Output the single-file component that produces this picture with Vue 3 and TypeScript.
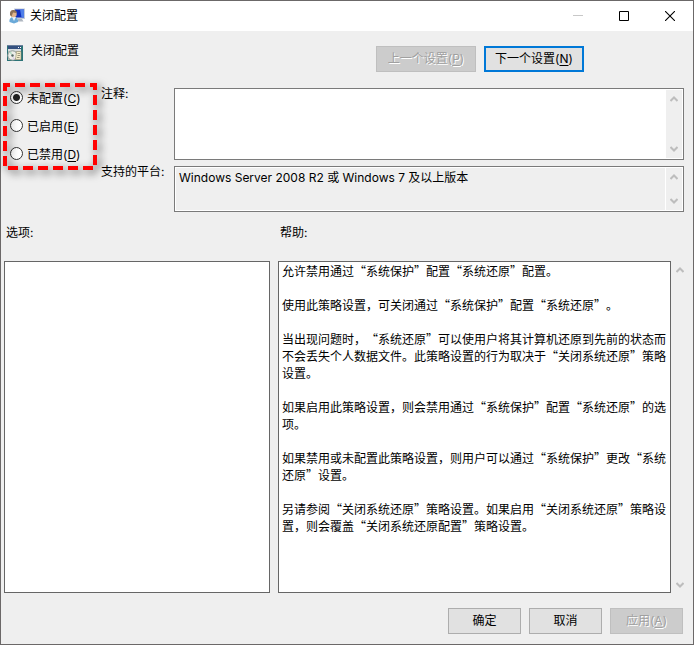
<script setup lang="ts">
import { ref } from 'vue'

interface PolicyState {
  value: string
  label: string
  key: string
}

const states: PolicyState[] = [
  { value: 'unset', label: '未配置', key: 'C' },
  { value: 'enabled', label: '已启用', key: 'E' },
  { value: 'disabled', label: '已禁用', key: 'D' },
]

const selected = ref('unset')
const comment = ref('')
const platform = ref('Windows Server 2008 R2 或 Windows 7 及以上版本')

const help: string[] = [
  '允许禁用通过“系统保护”配置“系统还原”配置。',
  '使用此策略设置，可关闭通过“系统保护”配置“系统还原”。',
  '当出现问题时，“系统还原”可以使用户将其计算机还原到先前的状态而不会丢失个人数据文件。此策略设置的行为取决于“关闭系统还原”策略设置。',
  '如果启用此策略设置，则会禁用通过“系统保护”配置“系统还原”的选项。',
  '如果禁用或未配置此策略设置，则用户可以通过“系统保护”更改“系统还原”设置。',
  '另请参阅“关闭系统还原”策略设置。如果启用“关闭系统还原”策略设置，则会覆盖“关闭系统还原配置”策略设置。',
]
</script>

<template>
  <div class="window" lang="zh-CN">
    <header class="titlebar">
      <svg class="app-icon" viewBox="0 0 16 16" aria-hidden="true">
        <path d="M5 0.500H16V11H6Z" fill="#c3ccd8" />
        <path d="M6 1.500H15V9.500H6Z" fill="#1030c0" />
        <path d="M11 1.500H15V9.500H12.500Z" fill="#4f7fe8" />
        <path d="M9 11H13L14.500 13.500H8Z" fill="#aeb6c0" />
        <path d="M0.500 14C0 10.500 2 9 4.500 9S9.500 10.500 9 14L5 15.500Z" fill="#6aa9d8" />
        <path d="M3 9L5 13L7 9Z" fill="#e8f3fb" />
        <circle cx="4.500" cy="6" r="3.200" fill="#e2b58a" />
        <path d="M1 7C0.500 3 2.500 1.500 5 2S8 4 7.500 5L4 4.500L2.500 8.500Z" fill="#8d7157" />
      </svg>
      <h1 class="title">关闭配置</h1>
      <div class="controls">
        <button class="control" type="button" disabled aria-label="最小化">
          <svg viewBox="0 0 10 10"><path d="M0 4.500H10" stroke="#c8c8c8" /></svg>
        </button>
        <button class="control" type="button" aria-label="最大化">
          <svg viewBox="0 0 10 10"><path d="M0.500 0.500H9.500V9.500H0.500Z" fill="none" stroke="#000" /></svg>
        </button>
        <button class="control" type="button" aria-label="关闭">
          <svg viewBox="0 0 10 10"><path d="M0 0L10 10M10 0L0 10" stroke="#000" stroke-width="1.100" /></svg>
        </button>
      </div>
    </header>

    <section class="heading">
      <svg class="policy-icon" viewBox="0 0 16 16" aria-hidden="true">
        <path d="M0 0H16V16H0Z" fill="#2c7377" />
        <path d="M0 0H16V1H0Z" fill="#6a7f9c" />
        <path d="M1 1H14V4H1Z" fill="#34507f" />
        <path d="M1 4H14V6H1Z" fill="#d8dde0" />
        <path d="M1 6H14V15H1Z" fill="#b7bdb6" />
        <path d="M11 2.500H12M13 2.500H14" stroke="#fff" />
        <circle cx="5.500" cy="10.500" r="4.700" fill="#eceee9" stroke="#8b9994" />
        <path d="M5.500 10.500L2 7.500L4 6.500Z" fill="#b4dcc5" />
        <path d="M5.500 10.500L8 14L6 15Z" fill="#dfd0e4" />
        <circle cx="5.500" cy="10.500" r="1.200" fill="#556965" />
        <path d="M9.500 6.500H14V14.500H8.500Z" fill="#f4ecc9" stroke="#948d70" stroke-width="0.600" />
        <path d="M10.500 8.500H13M10.500 10.500H13M10 12.500H12.500" stroke="#a09a80" />
      </svg>
      <h2 class="setting-name">关闭配置</h2>
      <div class="nav">
        <button class="btn nav-btn" type="button" disabled>上一个设置(<u>P</u>)</button>
        <button class="btn nav-btn focused" type="button">下一个设置(<u>N</u>)</button>
      </div>
    </section>

    <section class="config">
      <fieldset class="states">
        <label v-for="s in states" :key="s.value" class="state">
          <input v-model="selected" class="radio" type="radio" name="state" :value="s.value" />
          <span>{{ s.label }}(<u>{{ s.key }}</u>)</span>
        </label>
        <svg class="marker" viewBox="0 0 94 87" aria-hidden="true">
          <path
            d="M0 2H92V85H2V0"
            fill="none"
            stroke="#ff0000"
            stroke-width="4"
            stroke-dasharray="10 5"
            stroke-dashoffset="3"
          />
        </svg>
      </fieldset>
      <label class="field-label" for="comment">注释:</label>
      <div class="field comment">
        <textarea id="comment" v-model="comment" class="text"></textarea>
        <div class="scroll">
          <svg class="arrow" viewBox="0 0 8 6"><path d="M0.500 5L4 1.500L7.500 5" /></svg>
          <svg class="arrow" viewBox="0 0 8 6"><path d="M0.500 1L4 4.500L7.500 1" /></svg>
        </div>
      </div>
      <label class="field-label" for="platform">支持的平台:</label>
      <div class="field platform">
        <textarea id="platform" v-model="platform" class="text" readonly></textarea>
        <div class="scroll">
          <svg class="arrow" viewBox="0 0 8 6"><path d="M0.500 5L4 1.500L7.500 5" /></svg>
          <svg class="arrow" viewBox="0 0 8 6"><path d="M0.500 1L4 4.500L7.500 1" /></svg>
        </div>
      </div>
    </section>

    <main class="panes">
      <h3 class="pane-title">选项:</h3>
      <h3 class="pane-title">帮助:</h3>
      <div class="pane"></div>
      <div class="help-row">
        <div class="pane help">
          <p v-for="(line, i) in help" :key="i">{{ line }}</p>
        </div>
        <div class="scroll outer">
          <svg class="arrow" viewBox="0 0 8 6"><path d="M0.500 5L4 1.500L7.500 5" /></svg>
          <svg class="arrow" viewBox="0 0 8 6"><path d="M0.500 1L4 4.500L7.500 1" /></svg>
        </div>
      </div>
    </main>

    <footer class="actions">
      <button class="btn" type="button">确定</button>
      <button class="btn" type="button">取消</button>
      <button class="btn" type="button" disabled>应用(<u>A</u>)</button>
    </footer>
  </div>
</template>

<style>
body {
  margin: 0;
}
</style>

<style scoped>
.window {
  box-sizing: border-box;
  min-height: 100vh;
  display: flex;
  flex-direction: column;
  border: 1px solid #6b6868;
  background: #efefef;
  color: #000;
  font: 12px/16px Inter, 'Noto Sans CJK SC', sans-serif;
}
h1,
h2,
h3,
p {
  margin: 0;
  font-size: 12px;
  font-weight: 400;
}
u {
  text-underline-offset: 2px;
}
.titlebar {
  display: flex;
  align-items: center;
  height: 30px;
  padding-left: 8px;
  background: #fff;
}
.app-icon,
.policy-icon {
  width: 16px;
  height: 16px;
}
.title {
  margin-left: 5px;
}
.controls {
  display: flex;
  margin-left: auto;
}
.control {
  display: grid;
  place-items: center;
  width: 46px;
  height: 30px;
  padding: 0;
  border: 0;
  background: none;
}
.control svg {
  display: block;
  width: 10px;
  height: 10px;
}
.heading {
  display: flex;
  align-items: flex-start;
  padding: 14px 109px 0 6px;
}
.setting-name {
  margin-left: 8px;
  line-height: 12px;
}
.nav {
  display: flex;
  gap: 8px;
  margin: 1px 0 0 auto;
}
.btn {
  box-sizing: border-box;
  width: 73px;
  height: 26px;
  padding: 0;
  border: 1px solid #adadad;
  background: #e1e1e1;
  color: #000;
  font: inherit;
}
.nav-btn {
  width: 100px;
}
.focused {
  border: 2px solid #0078d7;
}
.btn:disabled {
  border-color: #bfbfbf;
  background: #ccc;
  color: #a0a0a0;
  text-shadow: 1px 1px 0 #fff;
}
.config {
  display: grid;
  grid-template-columns: 100px 73px 1fr;
  grid-template-rows: 72px 46px;
  row-gap: 6px;
  padding: 16px 9px 0 0;
}
.states {
  position: relative;
  grid-row: 1 / 3;
  display: flex;
  flex-direction: column;
  gap: 12px;
  min-width: 0;
  margin: 0;
  padding: 3px 0 0 9px;
  border: 0;
}
.state {
  display: flex;
  align-items: flex-start;
  gap: 4px;
}
.radio {
  appearance: none;
  box-sizing: border-box;
  width: 13px;
  height: 13px;
  margin: 0;
  border: 1px solid #333;
  border-radius: 50%;
  background: #fff;
}
.radio:checked {
  background: radial-gradient(circle, #222 3px, #fff 4px);
}
.marker {
  position: absolute;
  top: -5px;
  left: 2px;
  width: 94px;
  height: 87px;
  overflow: visible;
  pointer-events: none;
  filter: drop-shadow(3px 3px 4px rgba(0, 0, 0, 0.65));
}
.field-label {
  line-height: 12px;
}
.field {
  display: flex;
  border: 1px solid #7a7a7a;
  background: #fff;
}
.text {
  flex: 1;
  min-width: 0;
  padding: 3px 4px;
  border: 0;
  outline: 0;
  resize: none;
  overflow: hidden;
  background: #fff;
  color: inherit;
  font: inherit;
}
.platform .text {
  margin: 1px;
  padding: 2px 3px;
  background: #efefef;
}
.scroll {
  display: flex;
  flex-direction: column;
  align-items: center;
  justify-content: space-between;
  box-sizing: border-box;
  width: 16px;
  margin: 1px 1px 1px 0;
  padding: 6px 0;
  background: #efefef;
}
.arrow {
  width: 8px;
  height: 6px;
}
.arrow path {
  fill: none;
  stroke: #bdbdbd;
  stroke-width: 2;
}
.panes {
  flex: 1;
  display: grid;
  grid-template-columns: 266fr 415fr;
  grid-template-rows: 16px 1fr;
  gap: 20px 8px;
  padding: 13px 0 0 3px;
}
.pane-title {
  padding-left: 2px;
}
.pane {
  box-sizing: border-box;
  border: 1px solid #666;
  background: #fff;
}
.help-row {
  display: flex;
}
.help {
  flex: 1;
  display: flex;
  flex-direction: column;
  gap: 17px;
  padding: 0 3px;
  font-family: 'Noto Sans CJK SC', sans-serif;
  line-height: 17px;
  text-spacing-trim: space-all;
}
.outer {
  margin: 0 5px 0 1px;
  padding: 6px 0 5px;
}
.actions {
  display: flex;
  justify-content: flex-end;
  gap: 8px;
  padding: 15px 10px 10px;
}
</style>
